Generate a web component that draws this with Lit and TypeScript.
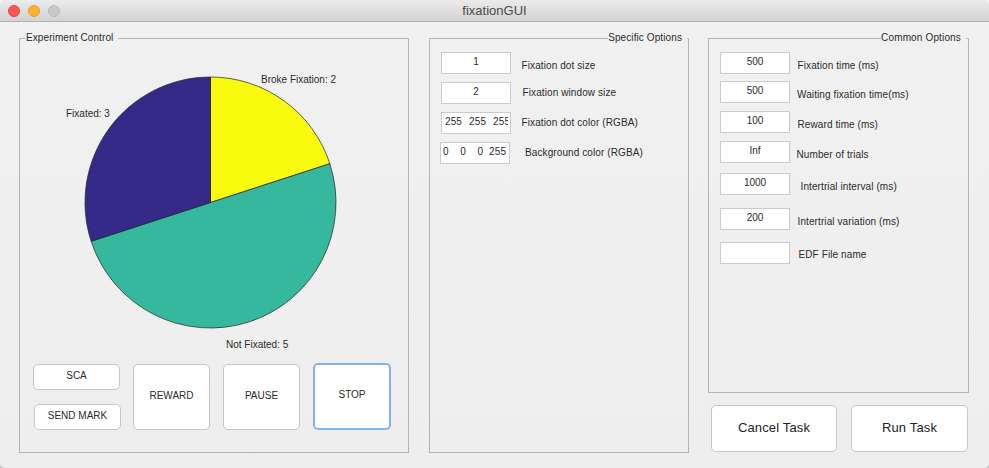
import { LitElement, css, html, svg } from "lit";
import { customElement } from "lit/decorators.js";

interface Row {
  value: string;
  label: string;
  gap: number; // space above the row
  shift?: number; // the input sits a pixel left of the column in places
  labelX: number;
  labelY: number;
  align?: string;
}

const specific: Row[] = [
  { value: "1", label: "Fixation dot size", gap: 8, labelX: 10.5, labelY: 8 },
  { value: "2", label: "Fixation window size", gap: 8, labelX: 11.5, labelY: 5 },
  { value: "255  255  255  255", label: "Fixation dot color (RGBA)", gap: 8, labelX: 10.5, labelY: 5, align: "left wide" },
  { value: "0    0    0  255", label: "Background color (RGBA)", gap: 8, shift: -1, labelX: 14, labelY: 5, align: "left" },
];

const common: Row[] = [
  { value: "500", label: "Fixation time (ms)", gap: 8, labelX: 7.5, labelY: 8 },
  { value: "500", label: "Waiting fixation time(ms)", gap: 7, labelX: 7, labelY: 8 },
  { value: "100", label: "Reward time (ms)", gap: 8, labelX: 7.5, labelY: 8 },
  { value: "Inf", label: "Number of trials", gap: 8, labelX: 6.5, labelY: 8 },
  { value: "1000", label: "Intertrial interval (ms)", gap: 10, labelX: 10.5, labelY: 8 },
  { value: "200", label: "Intertrial variation (ms)", gap: 13, labelX: 7.5, labelY: 8 },
  { value: "", label: "EDF File name", gap: 12, labelX: 8.5, labelY: 7 },
];

// pie, clockwise from twelve o'clock
const slices = [
  { count: 2, color: "#f9fb0e" },
  { count: 5, color: "#36b89e" },
  { count: 3, color: "#352a87" },
];

const CX = 190.5;
const CY = 158.5;
const R = 125.5;

function slicePaths() {
  const total = slices.reduce((sum, s) => sum + s.count, 0);
  let start = 0;
  return slices.map((s) => {
    const end = start + (s.count / total) * Math.PI * 2;
    const x0 = CX + R * Math.sin(start);
    const y0 = CY - R * Math.cos(start);
    const x1 = CX + R * Math.sin(end);
    const y1 = CY - R * Math.cos(end);
    const large = end - start > Math.PI ? 1 : 0;
    start = end;
    return svg`<path d="M${CX} ${CY}L${x0} ${y0}A${R} ${R} 0 ${large} 1 ${x1} ${y1}Z" fill=${s.color} stroke="#222" stroke-width="0.7"></path>`;
  });
}

@customElement("app-root")
export class AppRoot extends LitElement {
  static styles = css`
    :host {
      display: block;
      width: 989px;
      height: 468px;
      overflow: hidden;
      background: linear-gradient(to bottom, #f6f6f6 50%, #c4c4c4 50%);
      font-family: "Liberation Sans", Arial, sans-serif;
      font-size: 10px;
      color: #2b2b2b;
    }

    .window {
      height: 468px;
      display: flex;
      flex-direction: column;
      background: linear-gradient(to bottom, #f1f1f1, #eeeeee);
      border-radius: 5px;
      overflow: hidden;
    }

    .titlebar {
      flex: none;
      height: 21px;
      display: flex;
      align-items: center;
      position: relative;
      background: linear-gradient(to bottom, #ebebeb, #d3d3d3);
      border-bottom: 1px solid #b1b1b1;
    }

    .lights {
      display: flex;
      gap: 8px;
      padding-left: 8px;
    }

    .light {
      width: 12px;
      height: 12px;
      border-radius: 50%;
      box-sizing: border-box;
    }

    .red { background: #fc5753; border: 1px solid #df4744; }
    .amber { background: #fdb12f; border: 1px solid #de9f34; }
    .grey { background: #c8c8c8; border: 1px solid #b9b9b9; }

    .title {
      position: absolute;
      left: 0;
      right: 0;
      text-align: center;
      font-size: 13px;
      color: #4a4a4a;
    }

    .content {
      display: grid;
      grid-template-columns: 390px 260px 260px;
      column-gap: 20px;
      padding: 10px 0 0 19px;
    }

    .content > :last-child {
      margin-left: -1px;
    }

    fieldset {
      margin: 0;
      padding: 0;
      min-width: 0;
      box-sizing: border-box;
      border: 1px solid #b4b4b4;
      height: 421px;
    }

    legend {
      padding: 0 5px 0 1px;
      margin-left: 5px;
      line-height: 12px;
      height: 12px;
      letter-spacing: 0.1px;
    }

    legend.right {
      margin-left: auto;
      margin-right: 1px;
      padding: 0 5px 0 0;
    }

    .side legend.right {
      margin-right: 2px;
      letter-spacing: 0.15px;
    }

    .pie {
      display: block;
      width: 388px;
      height: 320px;
    }

    .pie text {
      font-size: 10px;
      fill: #2b2b2b;
    }

    .controls {
      display: flex;
      align-items: flex-start;
      padding-left: 13px;
    }

    .stack {
      display: flex;
      flex-direction: column;
      gap: 14px;
      margin-right: 12px;
    }

    button {
      font: inherit;
      color: inherit;
      padding: 0 0 3px;
      box-sizing: border-box;
      background: #fff;
      border: 1px solid #c6c6c6;
      border-radius: 5px;
    }

    .small { width: 87px; height: 26px; }
    .big { width: 77px; height: 66px; margin-right: 13px; }
    .stack .offset { margin-left: 1px; }

    .stop {
      width: 78px;
      height: 67px;
      margin: -1px 0 0;
      padding-bottom: 4px;
      border: 2px solid #80b3ee;
    }

    .rows {
      display: flex;
      flex-direction: column;
      padding-left: 11px;
    }

    .row {
      display: flex;
      align-items: flex-start;
    }

    .row input {
      flex: none;
      width: 70px;
      height: 22px;
      box-sizing: border-box;
      padding: 0 0 3px;
      border: 1px solid #cbcbcb;
      border-radius: 0;
      background: #fff;
      font: inherit;
      color: inherit;
      text-align: center;
      outline: none;
    }

    .row input.left {
      text-align: left;
      padding-left: 2px;
      padding-right: 2px;
      letter-spacing: 0.12px;
    }

    .row input.wide {
      padding-left: 3px;
      word-spacing: 0.6px;
    }

    .row label {
      line-height: 12px;
      white-space: nowrap;
      letter-spacing: 0.1px;
    }

    .side {
      display: flex;
      flex-direction: column;
    }

    .side fieldset {
      height: 361px;
    }

    .actions {
      display: flex;
      gap: 14px;
      margin: 12px 0 0 3px;
    }

    .action {
      height: 47px;
      font-size: 13px;
      letter-spacing: 0.15px;
      color: #222;
      padding-bottom: 2px;
    }

    .cancel { width: 126px; }
    .run { width: 117px; }
  `;

  private renderRows(rows: Row[]) {
    return html`
      <div class="rows">
        ${rows.map(
          (r) => html`
            <div class="row" style="margin-top:${r.gap}px;margin-left:${r.shift ?? 0}px">
              <input class=${r.align ?? ""} .value=${r.value} aria-label=${r.label} />
              <label style="margin:${r.labelY}px 0 0 ${r.labelX - (r.shift ?? 0)}px">${r.label}</label>
            </div>
          `
        )}
      </div>
    `;
  }

  render() {
    return html`
      <div class="window">
        <header class="titlebar">
          <div class="lights">
            <span class="light red"></span>
            <span class="light amber"></span>
            <span class="light grey"></span>
          </div>
          <div class="title">fixationGUI</div>
        </header>
        <div class="content">
          <fieldset>
            <legend>Experiment Control</legend>
            <svg class="pie" viewBox="0 0 388 320">
              ${slicePaths()}
              <text x="241" y="39">Broke Fixation: 2</text>
              <text x="46" y="73">Fixated: 3</text>
              <text x="206" y="304">Not Fixated: 5</text>
            </svg>
            <div class="controls">
              <div class="stack">
                <button class="small">SCA</button>
                <button class="small offset">SEND MARK</button>
              </div>
              <button class="big">REWARD</button>
              <button class="big">PAUSE</button>
              <button class="stop">STOP</button>
            </div>
          </fieldset>
          <fieldset>
            <legend class="right">Specific Options</legend>
            ${this.renderRows(specific)}
          </fieldset>
          <div class="side">
            <fieldset>
              <legend class="right">Common Options</legend>
              ${this.renderRows(common)}
            </fieldset>
            <div class="actions">
              <button class="action cancel">Cancel Task</button>
              <button class="action run">Run Task</button>
            </div>
          </div>
        </div>
      </div>
    `;
  }
}
